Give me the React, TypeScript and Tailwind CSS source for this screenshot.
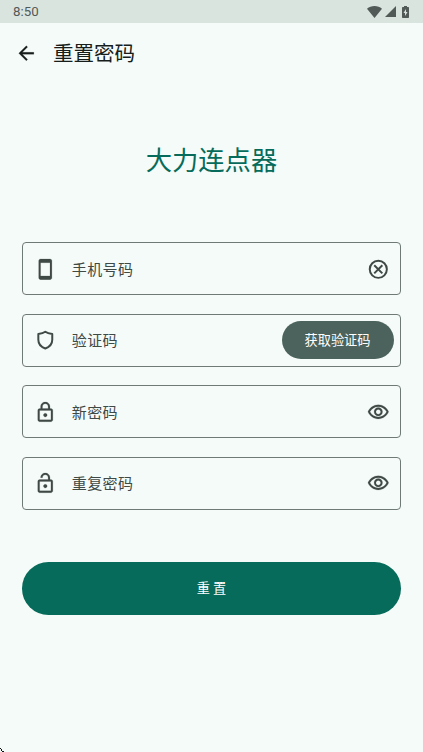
import type { ReactNode } from 'react';

const ICONS = {
    phone: 'M17 1.01L7 1c-1.1 0-2 .9-2 2v18c0 1.1.9 2 2 2h10c1.1 0 2-.9 2-2V3c0-1.1-.9-1.99-2-1.99zM17 19H7V5h10v14z',
    lock: 'M18 8h-1V6c0-2.76-2.24-5-5-5S7 3.24 7 6v2H6c-1.1 0-2 .9-2 2v10c0 1.1.9 2 2 2h12c1.1 0 2-.9 2-2V10c0-1.1-.9-2-2-2zM9 6c0-1.66 1.34-3 3-3s3 1.34 3 3v2H9V6zm9 14H6V10h12v10zm-6-3c1.1 0 2-.9 2-2s-.9-2-2-2-2 .9-2 2 .9 2 2 2z',
    lockOpen: 'M12 17c1.1 0 2-.9 2-2s-.9-2-2-2-2 .9-2 2 .9 2 2 2zm6-9h-1V6c0-2.76-2.24-5-5-5S7 3.24 7 6h2c0-1.66 1.34-3 3-3s3 1.34 3 3v2H6c-1.1 0-2 .9-2 2v10c0 1.1.9 2 2 2h12c1.1 0 2-.9 2-2V10c0-1.1-.9-2-2-2zm0 12H6V10h12v10z',
    eye: 'M12 6c3.79 0 7.17 2.13 8.82 5.5C19.17 14.87 15.79 17 12 17s-7.17-2.13-8.82-5.5C4.83 8.13 8.21 6 12 6m0-2C7 4 2.73 7.11 1 11.5 2.73 15.89 7 19 12 19s9.27-3.11 11-7.5C21.27 7.11 17 4 12 4zm0 5c1.38 0 2.5 1.12 2.5 2.5S13.38 14 12 14s-2.5-1.12-2.5-2.5S10.62 9 12 9m0-2c-2.48 0-4.5 2.02-4.5 4.5S9.52 16 12 16s4.5-2.02 4.5-4.5S14.48 7 12 7z',
    back: 'M20 11H7.83l5.59-5.59L12 4l-8 8 8 8 1.41-1.41L7.83 13H20v-2z',
};

const Icon = ({ d, className = '' }: { d: string; className?: string }) => (
    <svg viewBox="0 0 24 24" fill="currentColor" stroke="currentColor" strokeWidth="0.2" className={`size-[22.6px] shrink-0 ${className}`}>
        <path d={d} />
    </svg>
);

const ShieldIcon = () => (
    <svg viewBox="0 0 24 24" fill="none" stroke="currentColor" strokeWidth="2.1" strokeLinejoin="round" className="size-[22.6px] shrink-0">
        <path d="M12 2.9C10.3 4.2 7.5 5 4.6 5.3V11.5c0 4.5 2.7 7.6 7.4 9.2 4.7-1.6 7.4-4.7 7.4-9.2V5.3C16.5 5 13.7 4.2 12 2.9z" />
    </svg>
);

const ClearIcon = () => (
    <svg viewBox="0 0 24 24" fill="none" stroke="currentColor" strokeWidth="2.1" className="size-[22.6px] shrink-0">
        <circle cx="12" cy="12" r="9.1" />
        <path d="M7.7 7.7l8.6 8.6M16.3 7.7l-8.6 8.6" />
    </svg>
);

const Field = ({ icon, label, children }: { icon: ReactNode; label: string; children: ReactNode }) => (
    <div className="flex h-[53px] items-center rounded border border-[#6f7976] pl-[10.5px] text-[#3f4946]">
        {icon}
        <span className="ml-[15.3px] flex-1 text-[15px] leading-6 tracking-[0.4px]">{label}</span>
        {children}
    </div>
);

const StatusBar = () => (
    <div className="flex h-[23px] items-center justify-between bg-[#dae4df] pr-[14px] pl-[13px] text-[#525a57]">
        <span className="pt-px font-[Roboto,sans-serif] text-[13.3px] leading-none">8:50</span>
        <div className="flex items-center">
            <svg viewBox="0 0 15 12" fill="currentColor" className="h-3 w-[15px]">
                <path d="M7.5 12L0 2.8C2 1 4.6 0 7.5 0S13 1 15 2.8z" />
            </svg>
            <svg viewBox="0 0 11 11" fill="currentColor" className="ml-[3px] h-[11px] w-[11px]">
                <path d="M11 0v11H0z" />
            </svg>
            <svg viewBox="0 0 7 12" className="ml-[6px] h-3 w-[7px]">
                <path fill="currentColor" d="M2 0h3v1h1.3c.4 0 .7.3.7.7v9.6c0 .4-.3.7-.7.7H.7c-.4 0-.7-.3-.7-.7V1.7c0-.4.3-.7.7-.7H2z" />
                <path fill="#dae4df" d="M4 3L1.5 7H3v3l2.5-4H4z" />
            </svg>
        </div>
    </div>
);

const App = () => (
    <div className="relative h-[752px] w-[423px] overflow-hidden bg-[#f5fbf8] font-['Noto_Sans_CJK_SC',sans-serif]">
        <StatusBar />

        <header className="flex h-[59px] items-center pl-[15px] text-[#171d1b]">
            <Icon d={ICONS.back} className="mt-px" />
            <h1 className="mb-px ml-[15.3px] text-[20.5px] leading-8">重置密码</h1>
        </header>

        <main className="pr-[22.5px] pl-[22.4px]">
            <h2 className="mt-[57px] text-center text-[26.3px] leading-10 text-[#066b5b]">大力连点器</h2>

            <div className="mt-[63.3px] flex flex-col gap-[18.5px]">
                <Field icon={<Icon d={ICONS.phone} />} label="手机号码">
                    <span className="mr-[10px]"><ClearIcon /></span>
                </Field>
                <Field icon={<ShieldIcon />} label="验证码">
                    <button className="mr-[6px] h-[38px] w-[112px] rounded-full bg-[#4b635c] text-[13.2px] text-white">
                        获取验证码
                    </button>
                </Field>
                <Field icon={<Icon d={ICONS.lock} />} label="新密码">
                    <Icon d={ICONS.eye} className="mr-[10px]" />
                </Field>
                <Field icon={<Icon d={ICONS.lockOpen} />} label="重复密码">
                    <Icon d={ICONS.eye} className="mr-[10px]" />
                </Field>
            </div>

            <button className="mt-[52px] h-[53px] w-full rounded-full bg-[#066b5b] text-[13.2px] text-white">
                重 置
            </button>
        </main>

        {/* dark notch at the bottom-left screen corner */}
        <svg viewBox="0 0 4 4" fill="#111" shapeRendering="crispEdges" className="absolute bottom-0 left-0 size-1">
            <path d="M0 0h1v1H0zM1 1h1v2H1zM2 3h2v1H2z" />
        </svg>
    </div>
);

export default App;
